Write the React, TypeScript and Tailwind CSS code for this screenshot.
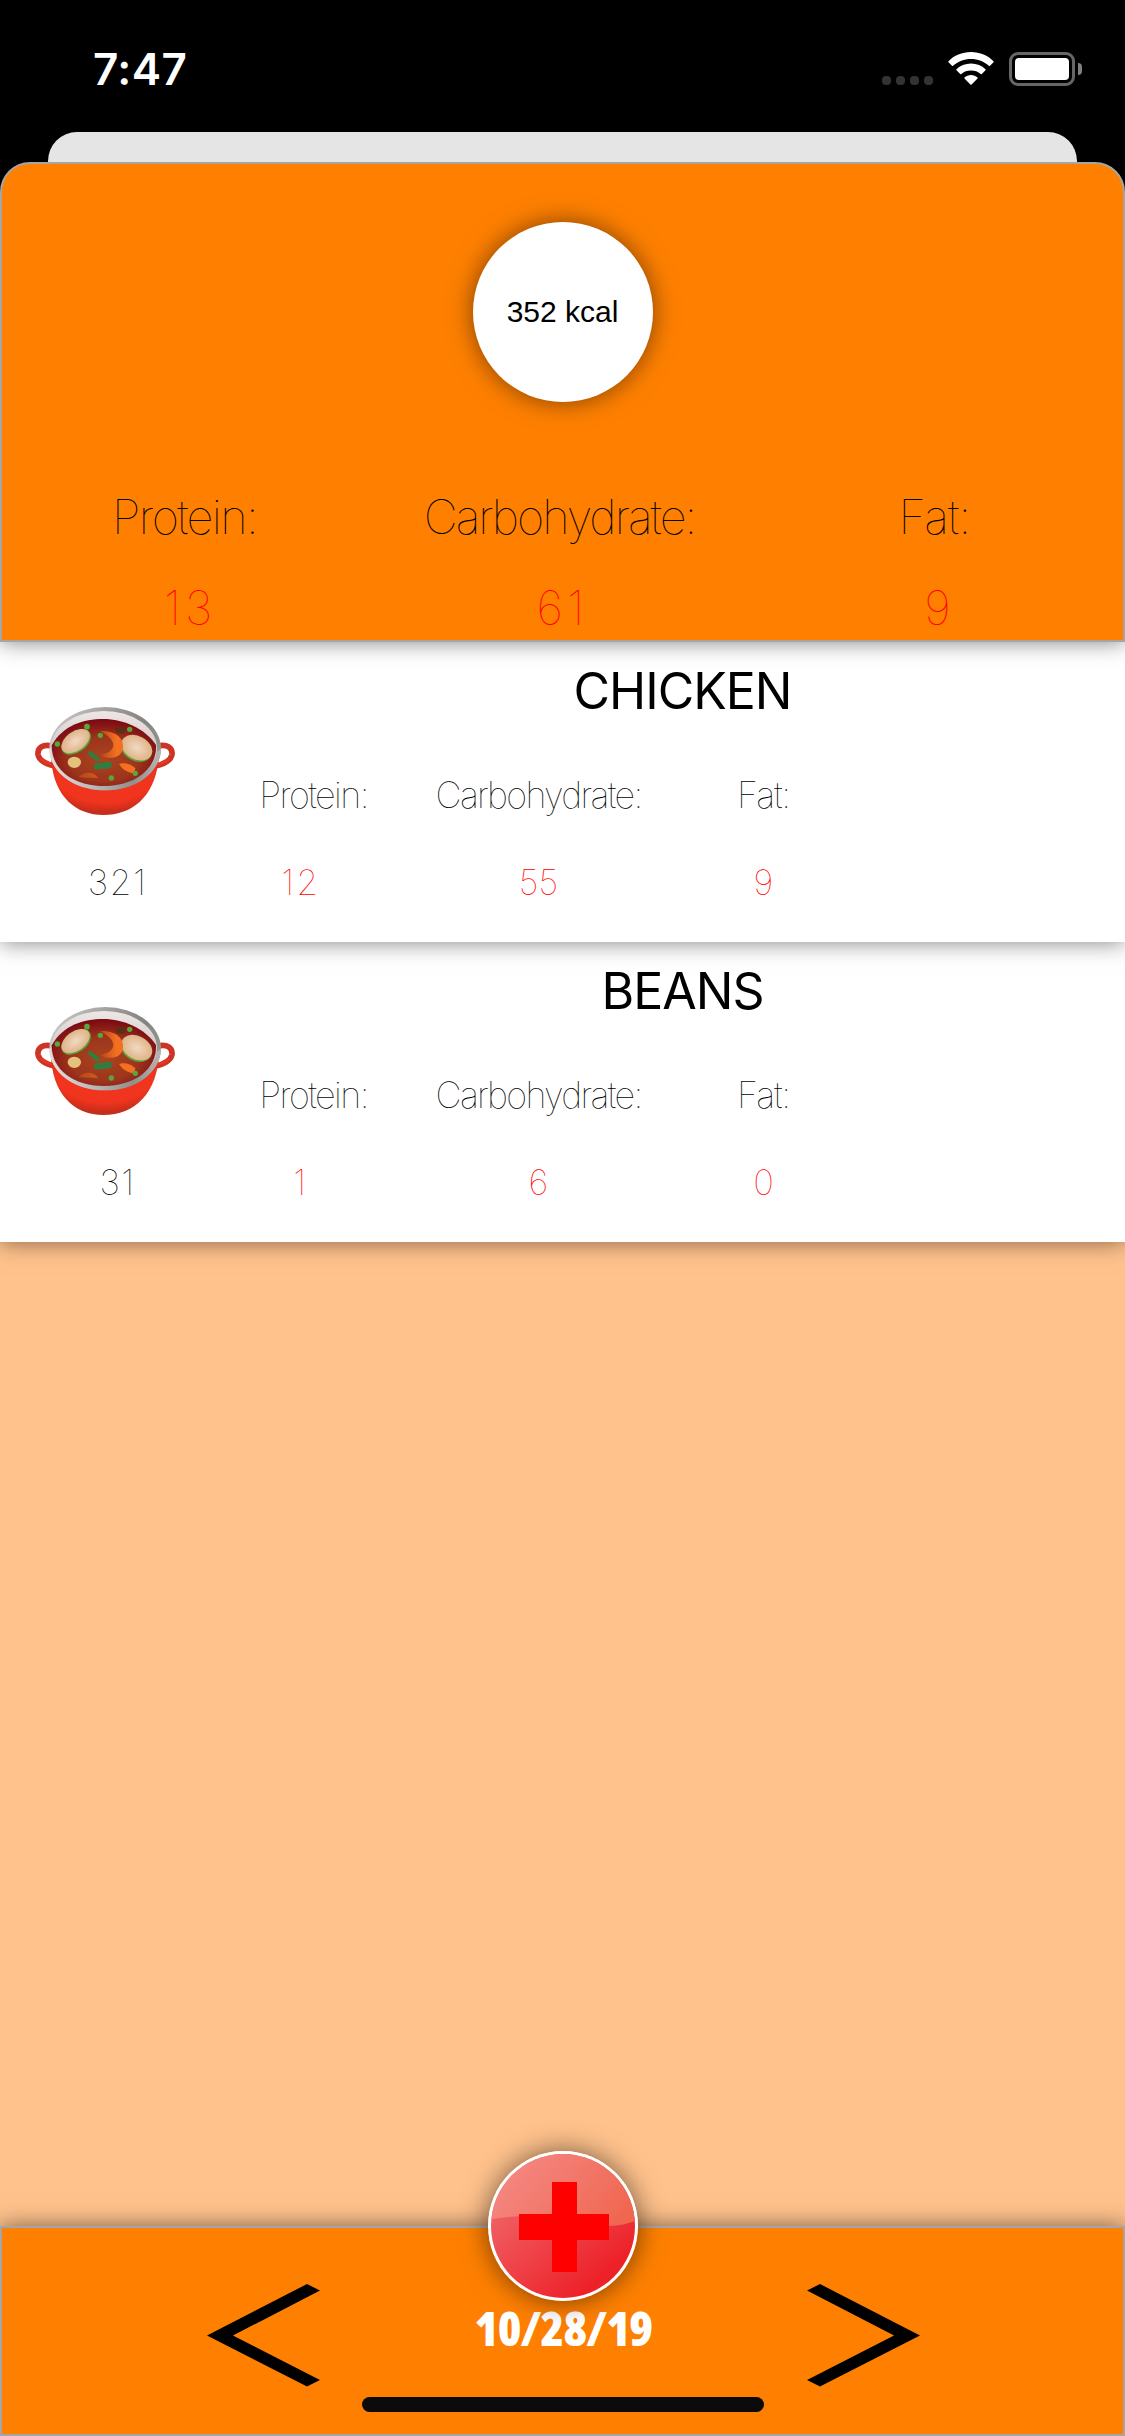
const DISPLAY = "font-['Inter',sans-serif]";
const THIN = "font-['Inter',sans-serif] font-thin whitespace-nowrap";

type Meal = { name: string; kcal: number; protein: number; carbs: number; fat: number };

const meals: Meal[] = [
  { name: 'CHICKEN', kcal: 321, protein: 12, carbs: 55, fat: 9 },
  { name: 'BEANS', kcal: 31, protein: 1, carbs: 6, fat: 0 },
];

function StatusBar() {
  return (
    <div className="flex h-[132px] items-start justify-between pt-[52px] pl-[93px] pr-[43px]">
      <span className={`${DISPLAY} text-[44px] leading-[34px] font-semibold tracking-[0.4px] text-white`}>7:47</span>
      <div className="flex h-[34px]">
        <div className="mt-6 mr-[15px] flex gap-[5px]">
          <i className="size-[9px] rounded-[4px] bg-[#333]" />
          <i className="size-[9px] rounded-[4px] bg-[#333]" />
          <i className="size-[9px] rounded-[4px] bg-[#333]" />
          <i className="size-[9px] rounded-[4px] bg-[#333]" />
        </div>
        <svg className="mr-[15px] h-[33px] w-[46px]" viewBox="0 0 46 33" fill="#fff">
          <path d="M23 0C32 0 40 3.500 45.500 9.200Q46 9.800 45.500 10.300L42 13.800Q41.500 14.300 40.900 13.700C36 9.500 30 7 23 7S10 9.500 5.100 13.700Q4.500 14.300 4 13.800L.5 10.300Q0 9.800.5 9.200C6 3.500 14 0 23 0Z" />
          <path d="M23 11.500C28.800 11.500 33.800 13.700 37.500 17.200Q38 17.800 37.500 18.300L33.800 22Q33.300 22.500 32.700 22C30 19.600 27 18.500 23 18.500S16 19.600 13.300 22Q12.700 22.500 12.200 22L8.500 18.300Q8 17.800 8.500 17.200C12.200 13.700 17.200 11.500 23 11.500Z" />
          <path d="M23 23C25.500 23 27.700 24 29.500 25.600Q30 26.100 29.500 26.600L23.600 32.500Q23 33 22.400 32.500L16.500 26.600Q16 26.100 16.500 25.600C18.300 24 20.500 23 23 23Z" />
        </svg>
        <div className="h-[34px] w-[66px] rounded-[9px] border-[3px] border-[#666] p-[3px]">
          <div className="h-full w-full rounded-[4px] bg-white" />
        </div>
        <i className="mt-[11px] ml-[3px] h-3 w-1 rounded-r-full bg-[#808080]" />
      </div>
    </div>
  );
}

function Pot() {
  return (
    <svg className="h-[108px] w-[140px]" viewBox="45 51 420 324">
      <defs>
        <linearGradient id="rim" x1="0" y1="0.3" x2="1" y2="0.6">
          <stop offset="0" stopColor="#c9c7c6" />
          <stop offset="0.5" stopColor="#9a9896" />
          <stop offset="0.75" stopColor="#84847f" />
          <stop offset="1" stopColor="#989796" />
        </linearGradient>
        <linearGradient id="lip" x1="0" x2="1">
          <stop offset="0" stopColor="#e6e0df" />
          <stop offset="0.4" stopColor="#bdb6b5" />
          <stop offset="0.75" stopColor="#8f8f8e" />
          <stop offset="1" stopColor="#b9b5b4" />
        </linearGradient>
        <linearGradient id="wall" x1="0" y1="0" x2="0" y2="1">
          <stop offset="0" stopColor="#efe7e5" />
          <stop offset="0.5" stopColor="#d2cac9" />
        </linearGradient>
        <radialGradient id="body" cx="0.5" cy="0.35" r="0.6">
          <stop offset="0.75" stopColor="#f0341e" />
          <stop offset="1" stopColor="#c62d1b" />
        </radialGradient>
        <radialGradient id="soup" cx="0.5" cy="0.6" r="0.6">
          <stop offset="0" stopColor="#a9441e" />
          <stop offset="0.55" stopColor="#9c351c" />
          <stop offset="1" stopColor="#7b0713" />
        </radialGradient>
        <radialGradient id="egg">
          <stop offset="0" stopColor="#f2d9c2" />
          <stop offset="1" stopColor="#deb488" />
        </radialGradient>
        <linearGradient id="shrimp">
          <stop offset="0" stopColor="#b5451b" />
          <stop offset="0.7" stopColor="#f36f21" />
        </linearGradient>
      </defs>
      <g fill="none" stroke="#cd3425" strokeWidth="17">
        <path d="M97 168C68 161 52 174 54 193C57 213 82 223 104 228" />
        <path d="M413 168C442 161 458 174 456 193C453 213 428 223 406 228" />
      </g>
      <g fill="none" stroke="#f0341e" strokeWidth="6">
        <path d="M62 206C72 217 88 221 102 226M448 206C438 217 422 221 408 226" />
      </g>
      <path d="M93 190C94 310 160 375 250 375C345 375 412 310 417 190Z" fill="url(#body)" />
      <ellipse cx="255.500" cy="176" rx="167.500" ry="125" fill="url(#rim)" />
      <path d="M88 176C90 250 165 301 255 301C345 301 420 250 423 176L405 190C400 245 335 288 252 288C165 288 100 240 97 170Z" fill="url(#lip)" />
      <ellipse cx="252" cy="175" rx="159" ry="112" fill="url(#wall)" />
      <path d="M95 166C130 105 190 87 250 87C310 87 375 115 408 165C412 240 340 288 252 288C160 288 95 240 95 166Z" fill="url(#soup)" />
      <ellipse cx="302" cy="121" rx="15" ry="10" fill="#5b3114" />
      <g transform="rotate(-36 168 155)">
        <ellipse cx="168" cy="156" rx="50" ry="31" fill="#54a136" />
        <ellipse cx="168" cy="153" rx="48" ry="29" fill="url(#egg)" />
      </g>
      <g transform="rotate(28 350 174)">
        <ellipse cx="350" cy="177" rx="49" ry="36" fill="#54a136" />
        <ellipse cx="350" cy="173" rx="49" ry="35" fill="url(#egg)" />
      </g>
      <path d="M240 123C290 120 318 150 307 182C297 208 260 208 241 195C262 190 278 184 280 166C280 148 262 136 240 123Z" fill="url(#shrimp)" />
      <path d="M297 222C310 216 335 222 346 235L343 250C325 248 308 240 297 222ZM176 262C188 245 220 241 235 264Z" fill="url(#shrimp)" />
      <path d="M210 190L232 207" stroke="#327c3f" strokeWidth="13" strokeLinecap="round" />
      <path d="M231 229L266 225" stroke="#327c3f" strokeWidth="19" strokeLinecap="round" />
      <ellipse cx="163" cy="217" rx="20" ry="17" fill="#e4c17d" />
      <g fill="#59a63a">
        <circle cx="201" cy="110" r="8.500" />
        <circle cx="241" cy="136" r="8" />
        <circle cx="329" cy="118" r="8" />
        <circle cx="112" cy="162" r="8" />
        <circle cx="346" cy="250" r="8" />
        <circle cx="274" cy="264" r="8" />
      </g>
    </svg>
  );
}

function Stat({ label, value, tracking, valueClass = '' }: { label: string; value: number; tracking: string; valueClass?: string }) {
  return (
    <div className="flex w-[375px] flex-col items-center">
      <span className={`${THIN} relative -left-[3px] text-[47px] leading-[60px] text-black ${tracking}`}>{label}</span>
      <span className={`${THIN} mt-[31px] text-[47px] leading-[60px] text-[#ff0000] ${valueClass}`}>{value}</span>
    </div>
  );
}

function Summary() {
  return (
    <section className="relative z-10 flex h-[480px] flex-col items-center rounded-t-[30px] border-2 border-[#a5a5a5] bg-[#ff8000] pt-[58px] shadow-[0_0_22px_rgba(0,0,0,0.5)]">
      <div className="flex size-[180px] items-center justify-center rounded-full bg-white pb-0.5 font-['Liberation_Sans',sans-serif] text-[30px] text-black shadow-[0_0_26px_rgba(0,0,0,0.5)]">
        352 kcal
      </div>
      <div className="mt-[85px] flex w-[1125px]">
        <Stat label="Protein:" value={13} tracking="tracking-[-1.7px]" valueClass="tracking-[4px] pl-[5px]" />
        <Stat label="Carbohydrate:" value={61} tracking="tracking-[-2px]" valueClass="tracking-[4px]" />
        <Stat label="Fat:" value={9} tracking="tracking-[-0.8px]" />
      </div>
    </section>
  );
}

function MealStat({ label, value, tracking, shift = '' }: { label: string; value: number; tracking: string; shift?: string }) {
  return (
    <div className="flex w-[225px] flex-col items-center">
      <span className={`${THIN} text-[36px] leading-[50px] text-black ${tracking}`}>{label}</span>
      <span className={`${THIN} mt-[37px] text-[35px] leading-[50px] text-[#ff0000] ${shift}`}>{value}</span>
    </div>
  );
}

function MealRow({ meal }: { meal: Meal }) {
  return (
    <article className="relative flex h-[300px] bg-white shadow-[0_0_22px_rgba(0,0,0,0.5)] first:z-[2]">
      <div className="flex w-[201px] flex-col pt-[65px] pl-[35px]">
        <Pot />
        <span className={`${THIN} mt-[42px] w-[165px] text-center text-[35px] leading-[50px] tracking-[1.5px] text-black`}>{meal.kcal}</span>
      </div>
      <div className="flex flex-1 flex-col">
        <h2 className={`${DISPLAY} mt-[19px] pl-[39px] text-center text-[50px] leading-[60px] tracking-[-1px] text-black`}>
          {meal.name}
        </h2>
        <div className="mt-[49px] flex">
          <MealStat label="Protein:" value={meal.protein} tracking="tracking-[-1.6px]" shift="mr-[25px] tracking-[2.5px]" />
          <MealStat label="Carbohydrate:" value={meal.carbs} tracking="tracking-[-1.7px]" />
          <MealStat label="Fat:" value={meal.fat} tracking="tracking-[-1.2px]" />
        </div>
      </div>
    </article>
  );
}

function AddButton() {
  return (
    <button className="absolute top-[-77px] left-[486px] size-[150px] rounded-full shadow-[0_0_28px_rgba(0,0,0,0.55)]">
      <svg className="size-[150px]" viewBox="0 0 150 150">
        <defs>
          <linearGradient id="red" x1="0.1" y1="0.2" x2="0.7" y2="0.9">
            <stop offset="0" stopColor="#f1686c" />
            <stop offset="1" stopColor="#ed2229" />
          </linearGradient>
          <linearGradient id="gloss" x1="0" y1="0.3" x2="1" y2="0.7">
            <stop offset="0" stopColor="#f58a86" />
            <stop offset="1" stopColor="#f0664f" />
          </linearGradient>
          <clipPath id="disc">
            <circle cx="75" cy="75" r="72" />
          </clipPath>
        </defs>
        <circle cx="75" cy="75" r="75" fill="#fff" />
        <circle cx="75" cy="75" r="72" fill="url(#red)" />
        <path d="M0 69C20 65 40 64 60 66C85 69 95 75 120 75C133 75 142 72 150 69V0H0Z" fill="url(#gloss)" clipPath="url(#disc)" />
        <path d="M64 31H89V63H121V89H89V121H64V89H31V63H64Z" fill="#ff0000" />
      </svg>
    </button>
  );
}

function Footer() {
  return (
    <footer className="relative h-[210px] border-2 border-[#a5a5a5] bg-[#ff8000] shadow-[0_0_22px_rgba(0,0,0,0.5)]">
      <AddButton />
      <div className="flex justify-between pt-14 pr-[203px] pl-[205px]">
        <svg className="h-[103px] w-[113px]" viewBox="0 0 113 103">
          <path d="M100 0L113 6.500L26 51.500L113 96L100 102.500L0 51.500Z" />
        </svg>
        <span className="mt-[14px] flex w-[180px] justify-center whitespace-nowrap font-['Open_Sans',sans-serif] text-[48px] leading-[60px] font-extrabold tracking-[-0.7px] text-white font-stretch-condensed">
          10/28/19
        </span>
        <svg className="h-[103px] w-[113px]" viewBox="0 0 113 103">
          <path d="M13 0L0 6.500L87 51.500L0 96L13 102.500L113 51.500Z" />
        </svg>
      </div>
      <div className="mt-[10px] ml-[360px] h-[15px] w-[402px] rounded-full bg-[#0b0b0b]" />
    </footer>
  );
}

export default function App() {
  return (
    <div className="relative flex h-[2436px] w-[1125px] flex-col overflow-hidden bg-black">
      <StatusBar />
      <div className="relative z-20 mx-12 h-[30px] shrink-0 rounded-t-[29px] bg-[#e5e5e5]" />
      <Summary />
      <main className="flex-1 bg-[#ffc28c]">
        {meals.map((meal) => (
          <MealRow key={meal.name} meal={meal} />
        ))}
      </main>
      <Footer />
    </div>
  );
}
